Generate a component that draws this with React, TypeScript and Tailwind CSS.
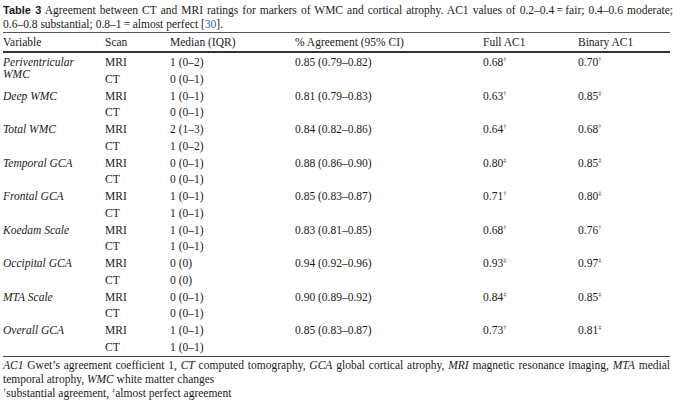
import React from "react";

type Row = {
  v: string;
  mri: string;
  ct: string;
  pct: string;
  full: string;
  fullMark: string;
  bin: string;
  binMark: string;
};

const rows: Row[] = [
  { v: "Periventricular WMC", mri: "1 (0–2)", ct: "0 (0–1)", pct: "0.85 (0.79–0.82)", full: "0.68", fullMark: "†", bin: "0.70", binMark: "†" },
  { v: "Deep WMC", mri: "1 (0–1)", ct: "0 (0–1)", pct: "0.81 (0.79–0.83)", full: "0.63", fullMark: "†", bin: "0.85", binMark: "‡" },
  { v: "Total WMC", mri: "2 (1–3)", ct: "1 (0–2)", pct: "0.84 (0.82–0.86)", full: "0.64", fullMark: "†", bin: "0.68", binMark: "†" },
  { v: "Temporal GCA", mri: "0 (0–1)", ct: "0 (0–1)", pct: "0.88 (0.86–0.90)", full: "0.80", fullMark: "‡", bin: "0.85", binMark: "‡" },
  { v: "Frontal GCA", mri: "1 (0–1)", ct: "1 (0–1)", pct: "0.85 (0.83–0.87)", full: "0.71", fullMark: "†", bin: "0.80", binMark: "‡" },
  { v: "Koedam Scale", mri: "1 (0–1)", ct: "1 (0–1)", pct: "0.83 (0.81–0.85)", full: "0.68", fullMark: "†", bin: "0.76", binMark: "†" },
  { v: "Occipital GCA", mri: "0 (0)", ct: "0 (0)", pct: "0.94 (0.92–0.96)", full: "0.93", fullMark: "‡", bin: "0.97", binMark: "‡" },
  { v: "MTA Scale", mri: "0 (0–1)", ct: "0 (0–1)", pct: "0.90 (0.89–0.92)", full: "0.84", fullMark: "‡", bin: "0.85", binMark: "‡" },
  { v: "Overall GCA", mri: "1 (0–1)", ct: "1 (0–1)", pct: "0.85 (0.83–0.87)", full: "0.73", fullMark: "†", bin: "0.81", binMark: "‡" },
];

const Sup = ({ c }: { c: string }) => (
  <span className="align-super text-[6.5px] leading-none">{c}</span>
);

const cols = "grid grid-cols-[102px_65px_125px_188px_95px_1fr]";

export default function App() {
  return (
    <div className="w-[680px] h-[405px] bg-white overflow-hidden pl-[3px] pr-[10px] pt-[3px] text-[#1c1a1a] font-['Liberation_Serif',serif] text-[11.5px]">
      {/* Caption */}
      <div className="leading-[14px]">
        <div className="text-justify [text-align-last:justify] w-[670px]">
          <span className="font-['Liberation_Sans',sans-serif] font-bold text-[11px]">Table 3</span>
          {"  "}Agreement between CT and MRI ratings for markers of WMC and cortical atrophy. AC1 values of 0.2–0.4{"\u2009"}={"\u2009"}fair; 0.4–0.6 moderate;
        </div>
        <div>
          0.6–0.8 substantial; 0.8–1{"\u2009"}={"\u2009"}almost perfect [<span className="text-[#2d5fb4]">30</span>].
        </div>
      </div>

      {/* Header */}
      <div className={`${cols} mt-[1px] border-t border-[#555] border-b-2 border-b-[#333] h-[21px] leading-[18px]`}>
        <div>Variable</div>
        <div>Scan</div>
        <div>Median (IQR)</div>
        <div>% Agreement (95% CI)</div>
        <div>Full AC1</div>
        <div>Binary AC1</div>
      </div>

      {/* Body */}
      <div className={`${cols} auto-rows-[16.75px] pt-[1px] border-b border-[#444] leading-[16.75px]`}>
        {rows.map((r) => (
          <React.Fragment key={r.v}>
            <div className="row-span-2 italic leading-[11.5px] pt-[3px] pr-[10px]">{r.v}</div>
            <div>MRI</div>
            <div>{r.mri}</div>
            <div>{r.pct}</div>
            <div>
              {r.full}
              <Sup c={r.fullMark} />
            </div>
            <div>
              {r.bin}
              <Sup c={r.binMark} />
            </div>
            <div>CT</div>
            <div>{r.ct}</div>
            <div></div>
            <div></div>
            <div></div>
          </React.Fragment>
        ))}
      </div>

      {/* Footnotes */}
      <div className="pt-[1px] leading-[14px]">
        <div className="text-justify [text-align-last:justify] w-[667px]">
          <i>AC1</i> Gwet’s agreement coefficient 1, <i>CT</i> computed tomography, <i>GCA</i> global cortical atrophy, <i>MRI</i> magnetic resonance imaging, <i>MTA</i> medial
        </div>
        <div>
          temporal atrophy, <i>WMC</i> white matter changes
        </div>
        <div>
          <Sup c="†" />substantial agreement, <Sup c="‡" />almost perfect agreement
        </div>
      </div>
    </div>
  );
}
